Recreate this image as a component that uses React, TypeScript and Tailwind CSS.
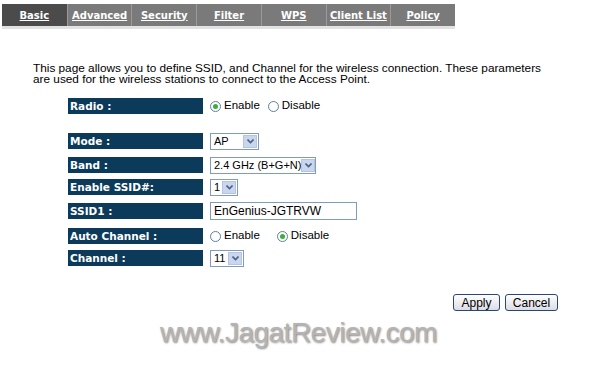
const tabs = ['Basic', 'Advanced', 'Security', 'Filter', 'WPS', 'Client List', 'Policy']

function Radio({ checked, label }: { checked?: boolean; label: string }) {
  return (
    <span className="flex items-center gap-[3px]">
      <span className="w-[11px] h-[11px] rounded-full border border-[#5f7f9f] bg-white flex items-center justify-center">
        {checked && <span className="w-[5px] h-[5px] rounded-full bg-[#3cae3c]" />}
      </span>
      <span>{label}</span>
    </span>
  )
}

function Select({ value, w }: { value: string; w: string }) {
  return (
    <div className={`${w} h-[17px] border border-[#7f9db9] bg-white flex items-center justify-between text-[11px] whitespace-nowrap font-['Liberation_Sans',sans-serif] text-black`}>
      <span className="pl-[3px] leading-none">{value}</span>
      <span className="w-[14px] h-[13px] mr-[1px] shrink-0 bg-[#c9d6ee] border border-[#b4c4e2] flex items-center justify-center">
        <svg width="7" height="5" viewBox="0 0 7 5"><path d="M0.5 0.5 L3.5 3.5 L6.5 0.5" stroke="#4d6185" strokeWidth="1.6" fill="none" /></svg>
      </span>
    </div>
  )
}

function Row({ label, children, mt }: { label: string; children: React.ReactNode; mt: string }) {
  return (
    <div className={`flex items-center h-[16px] ${mt}`}>
      <div className="w-[135px] h-[16px] bg-[#0b3a5a] text-white font-bold text-[10.5px] leading-[16px] pl-[2px] font-['DejaVu_Sans',sans-serif]">
        {label}
      </div>
      <div className="ml-[7px] flex items-center gap-[8px] text-[11.5px] font-['Liberation_Sans',sans-serif] text-black">
        {children}
      </div>
    </div>
  )
}

export default function App() {
  return (
    <div className="w-[600px] h-[392px] bg-white overflow-hidden relative">
      <div className="pt-[4px] pl-[2px]">
        <div className="w-[453px] h-[22px] bg-[#7a7a7a] flex">
          {tabs.map((t, i) => (
            <div key={t}
              className={`w-[65px] h-full flex items-center justify-center text-white font-bold text-[10px] underline font-['DejaVu_Sans',sans-serif] ${
                i === 0 ? 'bg-[#4b4b4b]' : 'border-l border-[#9a9a9a]'
              }`}>
              {t}
            </div>
          ))}
        </div>
        <div className="w-[453px] h-[3px] bg-[#e2e2e2]" />
      </div>

      <p className="mt-[34px] ml-[33px] w-[520px] text-[11.8px] leading-[11px] text-black font-['Liberation_Sans',sans-serif]">
        This page allows you to define SSID, and Channel for the wireless connection. These parameters are used for the wireless stations to connect to the Access Point.
      </p>

      <div className="ml-[68px] mt-[13px]">
        <Row label="Radio :" mt="mt-0">
          <Radio checked label="Enable" />
          <Radio label="Disable" />
        </Row>
        <Row label="Mode :" mt="mt-[19px]">
          <Select value="AP" w="w-[49px]" />
        </Row>
        <Row label="Band :" mt="mt-[8px]">
          <Select value="2.4 GHz (B+G+N)" w="w-[106px]" />
        </Row>
        <Row label="Enable SSID#:" mt="mt-[6px]">
          <Select value="1" w="w-[28px]" />
        </Row>
        <Row label="SSID1 :" mt="mt-[8px]">
          <div className="w-[147px] h-[18px] border border-[#7f9db9] bg-white text-[12px] pl-[3px] leading-[16px] font-['Liberation_Sans',sans-serif]">
            EnGenius-JGTRVW
          </div>
        </Row>
        <Row label="Auto Channel :" mt="mt-[9px]">
          <Radio label="Enable" />
          <span className="w-[1px]" />
          <Radio checked label="Disable" />
        </Row>
        <Row label="Channel :" mt="mt-[6px]">
          <Select value="11" w="w-[34px]" />
        </Row>
      </div>

      <div className="flex justify-end gap-[5px] pr-[42px] mt-[28px]">
        <button className="w-[47px] h-[17px] border border-[#27467a] rounded-[3px] bg-gradient-to-b from-white to-[#dcdce4] text-[12px] leading-none text-black font-['Liberation_Sans',sans-serif]">
          Apply
        </button>
        <button className="w-[53px] h-[17px] border border-[#27467a] rounded-[3px] bg-gradient-to-b from-white to-[#dcdce4] text-[12px] leading-none text-black font-['Liberation_Sans',sans-serif]">
          Cancel
        </button>
      </div>

      <div className="mt-[8px] ml-[160px] text-[28px] leading-none text-[#b4b4b4] font-['Liberation_Sans',sans-serif] [text-shadow:1px_1px_2px_#8a8a8a] tracking-[-0.5px]">
        www.JagatReview.com
      </div>
    </div>
  )
}
